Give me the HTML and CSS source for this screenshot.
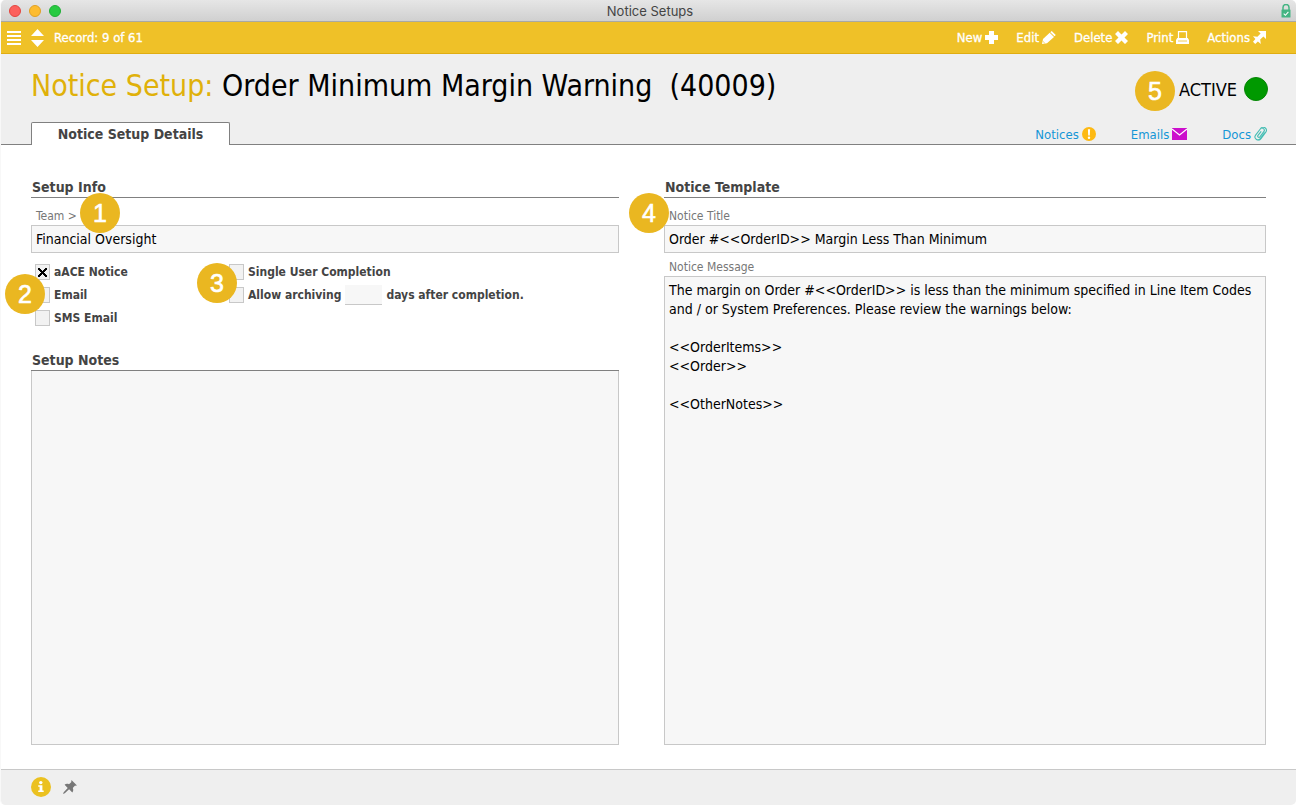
FILE: index.html
```html
<!DOCTYPE html>
<html lang="en">
<head>
<meta charset="utf-8">
<title>Notice Setups</title>
<link rel="stylesheet" href="styles.css">
</head>
<body>
<div class="window">
  <header class="titlebar">
    <div class="lights">
      <button class="light light-close" aria-label="Close"></button>
      <button class="light light-minimize" aria-label="Minimize"></button>
      <button class="light light-zoom" aria-label="Zoom"></button>
    </div>
    <div class="window-title">Notice Setups</div>
    <svg class="lock" width="10" height="14" viewBox="0 0 10 14" aria-hidden="true">
      <path d="M2 6V3.500a3 3 0 0 1 6 0V6" fill="none" stroke="#45b583" stroke-width="1.500"/>
      <rect x="0.500" y="5.500" width="9" height="8" rx="0.500" fill="#45b583"/>
      <path d="M2.700 9.700l1.700 1.600 3-3.400" fill="none" stroke="#fff" stroke-width="1.100"/>
    </svg>
  </header>

  <nav class="toolbar">
    <button class="icon-button" aria-label="List">
      <svg width="14" height="14" viewBox="0 0 14 14"><path d="M0 0h14v2H0zM0 4h14v2H0zM0 8h14v2H0zM0 12h14v2H0z" fill="#fff"/></svg>
    </button>
    <button class="icon-button" aria-label="Previous or next record">
      <svg width="13" height="18" viewBox="0 0 13 18"><path d="M6.500 0L13 7H0zM0 11h13l-6.500 7z" fill="#fff"/></svg>
    </button>
    <span class="record">Record: 9 of 61</span>
    <div class="actions">
      <button class="tool">New
        <svg width="13" height="13" viewBox="0 0 13 13"><path d="M4 0h5v4h4v5H9v4H4V9H0V4h4z" fill="#fff"/></svg>
      </button>
      <button class="tool">Edit
        <svg width="14" height="13" viewBox="0 0 14 13"><path d="M0 13l1-5L7.700 1.700 12 5.900 5 12.200zM8.300 1.200L9.700 0 13.800 4l-1.300 1.300z" fill="#fff"/><path d="M.8 10.300l2 1.800" stroke="#efc128" stroke-width=".7"/></svg>
      </button>
      <button class="tool">Delete
        <svg width="13" height="13" viewBox="0 0 13 13"><path d="M3 0l3.500 3.500L10 0l3 3-3.500 3.500L13 10l-3 3-3.500-3.500L3 13l-3-3 3.500-3.500L0 3z" fill="#fff"/></svg>
      </button>
      <button class="tool">Print
        <svg width="13" height="13" viewBox="0 0 13 13"><path d="M2.500 7V.6h8V7" fill="none" stroke="#fff" stroke-width="1.200"/><path d="M1.200 7h10.600L13 9v4H0V9z" fill="#fff"/><path d="M2 10h9" stroke="#efc128" stroke-width=".8"/></svg>
      </button>
      <button class="tool">Actions
        <svg width="13" height="13" viewBox="0 0 13 13"><path d="M5 0h8v8l-2.600-2.600-3.200 3.200L7.800 13 4.900 10.600 2.200 13 0 10.800l2.400-2.700L0 5.200l4.400.6 3.200-3.200z" fill="#fff"/></svg>
      </button>
    </div>
  </nav>

  <section class="record-header">
    <div class="heading-row">
      <h1 class="heading"><span class="heading-kind">Notice Setup:</span> Order Minimum Margin Warning&nbsp; (40009)</h1>
      <div class="status"><span class="marker marker-5">5</span>ACTIVE<span class="status-dot"></span></div>
    </div>
    <div class="tab-row">
      <button class="tab">Notice Setup Details</button>
      <div class="links">
        <a class="link" href="#">Notices
          <svg width="14" height="14" viewBox="0 0 14 14"><circle cx="7" cy="7" r="7" fill="#fdb913"/><path d="M5.900 2.200h2.200L7.800 8.400H6.200z" fill="#fff"/><circle cx="7" cy="10.700" r="1.200" fill="#fff"/></svg>
        </a>
        <a class="link" href="#">Emails
          <svg width="15" height="12" viewBox="0 0 15 12"><path d="M0 0h15v12H0z" fill="#cc0fcc"/><path d="M0 1l7.500 6L15 1" fill="none" stroke="#fff" stroke-width="1.200"/></svg>
        </a>
        <a class="link" href="#">Docs
          <svg width="13" height="14" viewBox="0 0 13 14"><path d="M10.800 5.700L6.300 11.600a2.900 2.900 0 0 1-4.700-3.500L6.300 2a2.200 2.200 0 0 1 3.500 2.700L5.900 9.900a1.200 1.200 0 0 1-1.900-1.500L7.200 4.300M6.500 1.700C8-.2 10-.1 11.300 1c1.400 1.200 1.500 2.800.3 4.400L7 11.700c-.7.900-1.500 1.400-2.500 1.500" fill="none" stroke="#45bdb3" stroke-width="1.100"/></svg>
        </a>
      </div>
    </div>
  </section>

  <main class="content">
    <section class="column">
      <h2 class="section-title">Setup Info</h2>
      <div class="field">
        <label class="field-label" for="team">Team &gt;<span class="marker marker-1">1</span></label>
        <input class="text-input" id="team" type="text" value="Financial Oversight">
      </div>
      <div class="options">
        <div class="option-list">
          <span class="marker marker-2">2</span>
          <label class="option"><input class="check" type="checkbox" checked>aACE Notice</label>
          <label class="option"><input class="check" type="checkbox">Email</label>
          <label class="option"><input class="check" type="checkbox">SMS Email</label>
        </div>
        <div class="option-list">
          <span class="marker marker-3">3</span>
          <label class="option"><input class="check" type="checkbox">Single User Completion</label>
          <div class="option">
            <input class="check" id="archive" type="checkbox"><label for="archive">Allow archiving</label>
            <input class="days" id="days" type="text"><label for="days">days after completion.</label>
          </div>
        </div>
      </div>
      <h2 class="section-title"><label for="notes">Setup Notes</label></h2>
      <textarea class="text-area notes" id="notes"></textarea>
    </section>

    <section class="column">
      <h2 class="section-title">Notice Template</h2>
      <div class="field">
        <label class="field-label" for="title"><span class="marker marker-4">4</span>Notice Title</label>
        <input class="text-input" id="title" type="text" value="Order #&lt;&lt;OrderID&gt;&gt; Margin Less Than Minimum">
      </div>
      <label class="field-label message-label" for="message">Notice Message</label>
      <textarea class="text-area" id="message">The margin on Order #&lt;&lt;OrderID&gt;&gt; is less than the minimum specified in Line Item Codes and / or System Preferences. Please review the warnings below:

&lt;&lt;OrderItems&gt;&gt;
&lt;&lt;Order&gt;&gt;

&lt;&lt;OtherNotes&gt;&gt;</textarea>
    </section>
  </main>

  <footer class="footer">
    <button class="icon-button" aria-label="Information">
      <svg width="20" height="20" viewBox="0 0 20 20"><circle cx="10" cy="10" r="10" fill="#ebc120"/><circle cx="9.800" cy="5.600" r="1.700" fill="#fff"/><path d="M7.200 8.300h4.200v5.300h1.300V15H7.200v-1.400h1.400V9.700H7.200z" fill="#fff"/></svg>
    </button>
    <button class="icon-button" aria-label="Pin">
      <svg width="14" height="14" viewBox="0 0 14 14"><path d="M8.500 0L14 5.500l-2.200.3-2 2.200c.8 1.900.5 3.300-.5 4.400L6.100 9.300 1.800 13.300 0 14l.7-1.800L4.700 7.900 1.600 4.700c1.100-1 2.600-1.300 4.400-.5l2.200-2z" fill="#777"/></svg>
    </button>
  </footer>
</div>
</body>
</html>
```
FILE: styles.css
```css
* {
  box-sizing: border-box;
}

body {
  margin: 0;
  background: #fff;
  color: #000;
  font-family: "DejaVu Sans Condensed", "Noto Sans", sans-serif;
  font-size: 14px;
}

button,
input,
textarea {
  margin: 0;
  font: inherit;
}

button {
  padding: 0;
  border: 0;
  background: none;
  color: inherit;
}

svg {
  display: block;
  flex: none;
}

.window {
  display: flex;
  flex-direction: column;
  min-height: 100vh;
  border-left: 1px solid #f8f8f8;
  border-radius: 5px;
  overflow: hidden;
}

.titlebar {
  display: grid;
  grid-template-columns: 1fr auto 1fr;
  align-items: center;
  height: 22px;
  padding: 0 5px 0 8px;
  border-bottom: 1px solid #a9a9a3;
  background: linear-gradient(#e6e6e6, #d0d0d0);
}

.lights {
  display: flex;
  gap: 8px;
}

.light {
  width: 12px;
  height: 12px;
  border: 1px solid;
  border-radius: 50%;
}

.light-close {
  border-color: #e2463f;
  background: #fc605c;
}

.light-minimize {
  border-color: #e0a025;
  background: #fdbc30;
}

.light-zoom {
  border-color: #1fae35;
  background: #28ca41;
}

.window-title {
  color: #444;
  font-family: Inter, "Liberation Sans", sans-serif;
  font-size: 13px;
}

.lock {
  justify-self: end;
}

.toolbar {
  display: flex;
  align-items: center;
  height: 32px;
  padding: 0 30px 0 6px;
  border-bottom: 1px solid #e0ad12;
  background: #efc128;
  color: #fff;
  font-size: 13px;
}

.toolbar .icon-button {
  margin-right: 10px;
}

.record,
.tool {
  -webkit-text-stroke: 0.3px #fff;
}

.actions {
  display: flex;
  gap: 18px;
  margin-left: auto;
}

.tool,
.link {
  display: flex;
  align-items: center;
  gap: 3px;
}

.record-header {
  display: flex;
  flex-direction: column;
  justify-content: space-between;
  height: 91px;
  padding: 10px 29px 0 30px;
  border-bottom: 1px solid #808080;
  background: #efefef;
}

.heading-row,
.tab-row,
.links,
.status {
  display: flex;
  align-items: center;
}

.heading-row,
.tab-row {
  justify-content: space-between;
}

.heading {
  margin: 0;
  font-size: 30px;
  font-weight: 400;
  line-height: 44px;
  white-space: pre;
}

.heading-kind {
  color: #e0b10a;
}

.status {
  position: relative;
  gap: 7px;
  padding-top: 6px;
  margin-right: -1px;
  font-size: 18px;
}

.status-dot {
  width: 24px;
  height: 24px;
  border: 1px solid #068606;
  border-radius: 50%;
  background: #090;
}

.tab {
  height: 23px;
  width: 199px;
  margin-bottom: -1px;
  border: 1px solid #808080;
  border-bottom: 0;
  border-radius: 2px 2px 0 0;
  background: #fff;
  color: #444;
  font-size: 14px;
  font-weight: 700;
}

.links {
  gap: 35px;
  padding-top: 2px;
  font-size: 13px;
}

.link {
  color: #1496d6;
  text-decoration: none;
}

.content {
  display: grid;
  flex: 1;
  grid-template-columns: 588fr 602fr;
  gap: 45px;
  padding: 32px 30px 24px;
}

.column {
  display: flex;
  flex-direction: column;
  min-width: 0;
}

.section-title {
  margin: 0;
  padding-left: 1px;
  border-bottom: 1px solid #808080;
  color: #444;
  font-size: 14px;
  font-weight: 700;
  line-height: 20px;
}

.field {
  display: flex;
  flex-direction: column;
  padding-top: 9px;
}

.field-label {
  position: relative;
  padding-left: 5px;
  color: #777;
  font-size: 12px;
  line-height: 18px;
}

.message-label {
  padding-top: 5px;
}

.text-input,
.text-area {
  width: 100%;
  border: 1px solid #c8c8c8;
  border-radius: 0;
  background: #f7f7f7;
  color: #000;
  font-size: 14px;
}

.text-input {
  height: 28px;
  padding: 0 4px;
}

.text-area {
  flex: 1;
  padding: 4px;
  line-height: 19px;
  resize: none;
}

.notes {
  border-top: 0;
}

.options {
  display: grid;
  grid-template-columns: 194px 1fr;
  padding: 11px 4px 24px;
}

.option-list {
  display: flex;
  flex-direction: column;
  position: relative;
  gap: 7px;
}

.option {
  display: flex;
  align-items: center;
  height: 16px;
  gap: 4px;
  color: #444;
  font-size: 12px;
  font-weight: 700;
}

.check {
  display: grid;
  place-items: center;
  width: 15px;
  height: 16px;
  border: 1px solid #c8c8c8;
  background: #f2f2f2;
  appearance: none;
}

.check:checked::before {
  width: 9px;
  height: 9px;
  background:
    linear-gradient(45deg, transparent 43%, #000 43% 57%, transparent 57%),
    linear-gradient(-45deg, transparent 43%, #000 43% 57%, transparent 57%);
  content: "";
}

.days {
  width: 37px;
  height: 20px;
  border: 0;
  border-bottom: 1px solid #c8c8c8;
  background: #f7f7f7;
}

.marker {
  position: absolute;
  z-index: 1;
  width: 40px;
  height: 40px;
  border-radius: 50%;
  background: #eab721;
  color: #fff;
  font-family: "Liberation Sans", Arial, sans-serif;
  font-size: 25px;
  line-height: 40px;
  text-align: center;
  -webkit-text-stroke: 0.6px #fff;
}

.marker-1 {
  top: -14px;
  left: 49px;
}

.marker-2 {
  top: 10px;
  left: -30px;
}

.marker-3 {
  top: -1px;
  left: -32px;
}

.marker-4 {
  top: -14px;
  left: -35px;
}

.marker-5 {
  top: 0;
  right: 93px;
}

.footer {
  display: flex;
  align-items: center;
  gap: 12px;
  height: 36px;
  padding: 0 30px 2px;
  border-top: 1px solid #c8c8c8;
  background: #efefef;
}
```
